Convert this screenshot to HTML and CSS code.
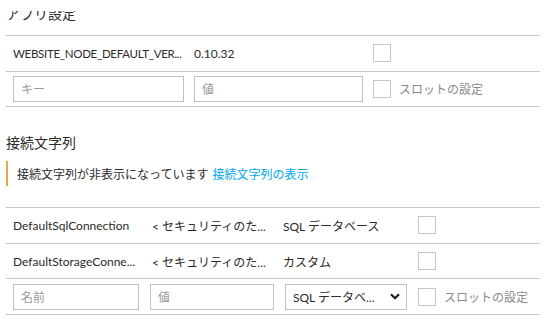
FILE: index.html
```html
<!DOCTYPE html>
<html lang="ja">
<head>
<meta charset="utf-8">
<link rel="stylesheet" href="styles.css">
</head>
<body>
<div class="page">
  <div class="title-clip"><h2 class="title">アプリ設定</h2></div>
  <div class="table app">
    <div class="row">
      <span class="cell key-long">WEBSITE_NODE_DEFAULT_VER...</span>
      <span class="cell">0.10.32</span>
      <span class="check"></span>
    </div>
    <div class="row">
      <input class="field" placeholder="キー">
      <input class="field" placeholder="値">
      <label class="slot"><span class="check"></span><span>スロットの設定</span></label>
    </div>
  </div>

  <h2 class="section">接続文字列</h2>
  <div class="notice"><span>接続文字列が非表示になっています</span><a class="link" href="#">接続文字列の表示</a></div>

  <div class="table conn">
    <div class="row">
      <span class="cell">DefaultSqlConnection</span>
      <span class="cell">&lt;&nbsp;セキュリティのた...</span>
      <span class="cell">SQL データベース</span>
      <span class="check"></span>
    </div>
    <div class="row">
      <span class="cell">DefaultStorageConne...</span>
      <span class="cell">&lt;&nbsp;セキュリティのた...</span>
      <span class="cell">カスタム</span>
      <span class="check"></span>
    </div>
    <div class="row">
      <input class="field" placeholder="名前">
      <input class="field" placeholder="値">
      <div class="select"><span class="sel-text">SQL データベ...</span>
        <svg class="chev" width="10" height="7" viewBox="0 0 10 7"><path d="M1 1.2 L5 5.2 L9 1.2" fill="none" stroke="#1e1e1e" stroke-width="2.2"/></svg>
      </div>
      <label class="slot"><span class="check"></span><span>スロットの設定</span></label>
    </div>
  </div>
</div>
</body>
</html>
```
FILE: styles.css
```css
* { box-sizing: border-box; }
html, body { margin: 0; padding: 0; background: #fff; }
body {
  font-family: "Lato", "Noto Sans CJK JP", sans-serif;
  font-size: 12px;
  color: #2b2b2b;
}
.page { margin-left: 6px; width: 534px; padding-top: 11px; }

.title-clip { height: 24px; overflow: hidden; }
.title { margin: -7px 0 0 0; font-size: 14px; line-height: 18px; font-weight: 400; font-family: "Noto Sans CJK JP", sans-serif; }

.table { border-top: 1px solid #c8c8c8; }
.row {
  display: grid;
  align-items: center;
  padding-left: 7px;
  height: 35.6px;
  border-bottom: 1px solid #c8c8c8;
}
.app .row { grid-template-columns: 171px 169px auto; column-gap: 10px; }
.conn .row { grid-template-columns: 126px 124px 122px auto; column-gap: 11px; }

.cell { white-space: nowrap; }
.conn .cell:nth-child(2) { margin-left: 2px; }
.conn .cell:nth-child(3) { margin-left: -2px; }
.key-long { font-size: 11.5px; letter-spacing: -0.3px; }

.check {
  display: inline-block;
  width: 18px; height: 18px;
  border: 1px solid #c6c6c6;
  background: #fff;
}
.field {
  height: 26px;
  border: 1px solid #c2c2c2;
  padding: 0 7px;
  font-family: "Noto Sans CJK JP", sans-serif;
  font-size: 12px;
  color: #2b2b2b;
  background: #fff;
  outline: none;
  width: 100%;
}
.field::placeholder { color: #9a9a9a; }

.slot { display: flex; align-items: center; gap: 8px; color: #8a8a8a; }

.select {
  height: 26px;
  border: 1px solid #c2c2c2;
  display: flex;
  align-items: center;
  justify-content: space-between;
  padding: 0 6px 0 7px;
}
.chev { display: block; }

.section {
  margin: 25px 0 9px 0;
  font-size: 14px;
  line-height: 20px;
  font-weight: 400;
  font-family: "Noto Sans CJK JP", sans-serif;
}
.notice {
  height: 25px;
  border-left: 2px solid #eba542;
  padding-left: 9px;
  display: flex;
  align-items: center;
  gap: 4px;
  margin-bottom: 21px;
}
.link { color: #00a8ec; text-decoration: none; }
```
